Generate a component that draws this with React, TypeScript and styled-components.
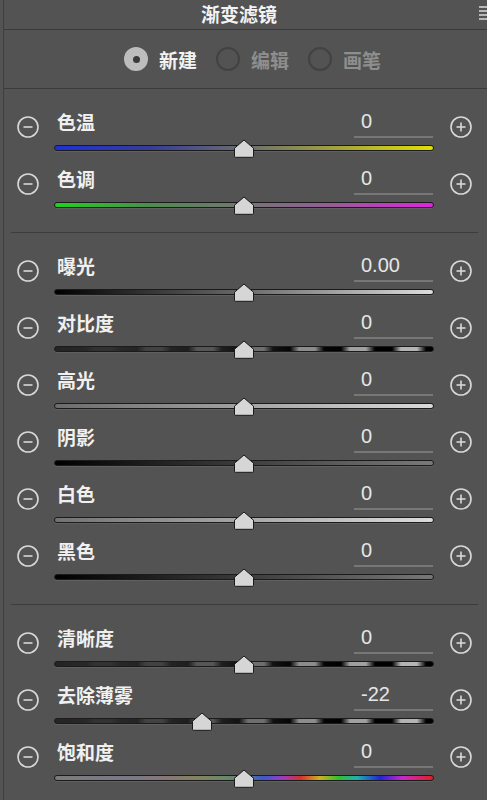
import React from 'react';
import styled, { createGlobalStyle } from 'styled-components';

const GlobalStyle = createGlobalStyle`
  html, body {
    margin: 0;
    padding: 0;
    background: #535353;
  }
  body {
    font-family: "Noto Sans CJK SC", "Noto Sans", sans-serif;
    -webkit-font-smoothing: antialiased;
  }
`;

const gray = (v: number) => `rgb(${v},${v},${v})`;

// the banded contrast / clarity / dehaze track
const bandTrack = () => {
  const light = [50, 66, 86, 110, 140, 160, 180];
  const dark = [40, 36, 30, 18, 5, 0, 0];
  const stops: string[] = [`${gray(36)} 0px`];
  light.forEach((l, k) => {
    const c = 48 + 51 * k;
    stops.push(`${gray(dark[k])} ${c - 17}px`);
    stops.push(`${gray(l)} ${c - 8}px`);
    stops.push(`${gray(l)} ${c + 8}px`);
    stops.push(`${gray(dark[k])} ${c + 17}px`);
  });
  stops.push(`${gray(0)} 100%`);
  return `linear-gradient(90deg, ${stops.join(', ')})`;
};

const tracks = {
  temp: 'linear-gradient(90deg, #1f30d8 0%, #363c98 25%, #6c6c72 50%, #a4a43c 75%, #e0e000 100%)',
  tint: 'linear-gradient(90deg, #1ed21e 0%, #4e8c4e 25%, #747474 50%, #9a5a9a 75%, #e222e2 100%)',
  exposure: 'linear-gradient(90deg, #000 0%, #6a6a6a 50%, #dcdcdc 100%)',
  band: bandTrack(),
  highlights: 'linear-gradient(90deg, #6c6c6c 0%, #dadada 100%)',
  shadows: 'linear-gradient(90deg, #000 0%, #7a7a7a 100%)',
  whites: 'linear-gradient(90deg, #727272 0%, #dcdcdc 100%)',
  blacks: 'linear-gradient(90deg, #000 0%, #777 100%)',
  saturation:
    'linear-gradient(90deg, #7c7c7c 0%, #7a7888 20%, #887676 30%, #84845e 38%, #6a886a 45%, #5e7e7e 50%, #3a5ad0 55%, #9a3ac8 60%, #d83030 65%, #d0b020 70%, #30c030 75%, #20b0b0 80%, #2424d8 86%, #c828c8 92%, #e02020 100%)',
};

type Slider = { label: string; value: string; pos: number; track: string };

const sections: Slider[][] = [
  [
    { label: '色温', value: '0', pos: 50, track: tracks.temp },
    { label: '色调', value: '0', pos: 50, track: tracks.tint },
  ],
  [
    { label: '曝光', value: '0.00', pos: 50, track: tracks.exposure },
    { label: '对比度', value: '0', pos: 50, track: tracks.band },
    { label: '高光', value: '0', pos: 50, track: tracks.highlights },
    { label: '阴影', value: '0', pos: 50, track: tracks.shadows },
    { label: '白色', value: '0', pos: 50, track: tracks.whites },
    { label: '黑色', value: '0', pos: 50, track: tracks.blacks },
  ],
  [
    { label: '清晰度', value: '0', pos: 50, track: tracks.band },
    { label: '去除薄雾', value: '-22', pos: 39, track: tracks.band },
    { label: '饱和度', value: '0', pos: 50, track: tracks.saturation },
  ],
];

const modes = ['新建', '编辑', '画笔'];

export default function App() {
  return (
    <>
      <GlobalStyle />
      <Panel>
        <Header>
          <Title>渐变滤镜</Title>
          <MenuIcon width="8" height="15" viewBox="0 0 8 15">
            {[1, 5, 9, 13].map((y) => (
              <rect key={y} x="0" y={y - 0.8} width="8" height="1.6" fill="#d2d2d2" />
            ))}
          </MenuIcon>
        </Header>
        <Modes>
          {modes.map((m, i) => (
            <Mode key={m} $active={i === 0}>
              <Radio $active={i === 0} />
              {m}
            </Mode>
          ))}
        </Modes>
        {sections.map((rows, si) => (
          <React.Fragment key={si}>
            {si > 0 && <Divider />}
            <Section>
              {rows.map((s) => (
                <Row key={s.label}>
                  <StepButton $offset={12.5}>
                    <StepIcon />
                  </StepButton>
                  <Control>
                    <TopLine>
                      <Label>{s.label}</Label>
                      <ValueField>{s.value}</ValueField>
                    </TopLine>
                    <Track $bg={s.track}>
                      <Thumb width="22" height="19" viewBox="0 0 22 19" style={{ left: `${s.pos}%` }}>
                        <path
                          d="M1.5 17.3 V9.2 L11 1 L20.5 9.2 V17.3 Q20.5 18.3 19.5 18.3 H2.5 Q1.5 18.3 1.5 17.3 Z"
                          fill="#d6d6d6"
                          stroke="#1a1a1a"
                          strokeWidth="1"
                        />
                      </Thumb>
                    </Track>
                  </Control>
                  <StepButton $offset={16}>
                    <StepIcon plus />
                  </StepButton>
                </Row>
              ))}
            </Section>
          </React.Fragment>
        ))}
      </Panel>
    </>
  );
}

const StepIcon = ({ plus }: { plus?: boolean }) => (
  <svg width="22" height="22" viewBox="0 0 22 22">
    <circle cx="11" cy="11" r="10" fill="none" stroke="#d8d8d8" strokeWidth="1.6" />
    <line x1="6.5" y1="11" x2="15.5" y2="11" stroke="#d8d8d8" strokeWidth="1.6" />
    {plus && <line x1="11" y1="6.5" x2="11" y2="15.5" stroke="#d8d8d8" strokeWidth="1.6" />}
  </svg>
);

const Panel = styled.div`
  margin-left: 3px;
  border-left: 1px solid #3f3f3f;
  height: 800px;
  overflow: hidden;
  background: #535353;
`;

const Header = styled.div`
  display: flex;
  height: 29px;
  border-bottom: 1px solid #3b3b3b;
`;

const Title = styled.div`
  flex: 1;
  text-align: center;
  padding-right: 5px;
  font-size: 19px;
  line-height: 27px;
  font-weight: 600;
  color: #f2f2f2;
`;

const MenuIcon = styled.svg`
  flex: none;
  margin-top: 6px;
`;

const Modes = styled.div`
  display: flex;
  align-items: center;
  gap: 19px;
  height: 58px;
  padding-left: 120px;
  border-bottom: 1px solid #3b3b3b;
`;

const Mode = styled.div<{ $active: boolean }>`
  display: flex;
  align-items: center;
  gap: 11px;
  font-size: 19px;
  font-weight: 600;
  color: ${(p) => (p.$active ? '#f2f2f2' : '#8e8e8e')};
`;

const Radio = styled.span<{ $active: boolean }>`
  width: 24px;
  height: 24px;
  box-sizing: border-box;
  border-radius: 50%;
  display: flex;
  align-items: center;
  justify-content: center;
  background: ${(p) => (p.$active ? '#bdbdbd' : 'transparent')};
  border: ${(p) => (p.$active ? 'none' : '2px solid #424242')};

  &::after {
    content: '';
    display: ${(p) => (p.$active ? 'block' : 'none')};
    width: 7px;
    height: 7px;
    border-radius: 50%;
    background: #3a3a3a;
  }
`;

const Section = styled.div`
  padding: 19px 0 10px;
`;

const Divider = styled.div`
  margin: 0 9px 0 7px;
  border-top: 1px solid #3c3c3c;
`;

const Row = styled.div`
  display: grid;
  grid-template-columns: 50px 380px 1fr;
  height: 57px;
`;

const StepButton = styled.button<{ $offset: number }>`
  justify-self: start;
  align-self: start;
  margin: 8px 0 0 ${(p) => p.$offset}px;
  padding: 0;
  border: none;
  background: none;
  width: 22px;
  height: 22px;
  display: block;

  svg {
    display: block;
  }
`;

const Control = styled.div`
  display: flex;
  flex-direction: column;
`;

const TopLine = styled.div`
  display: flex;
  justify-content: space-between;
  height: 30px;
`;

const Label = styled.span`
  padding-left: 3px;
  font-size: 19px;
  line-height: 28px;
  font-weight: 600;
  color: #f0f0f0;
`;

const ValueField = styled.div`
  width: 72px;
  height: 28px;
  margin-right: 1px;
  padding-left: 7px;
  border-bottom: 2px solid #777;
  font-family: "Liberation Sans", Arial, sans-serif;
  font-size: 20px;
  line-height: 27px;
  color: #e6e6e6;
`;

const Track = styled.div<{ $bg: string }>`
  position: relative;
  height: 6px;
  margin-top: 7px;
  box-sizing: border-box;
  border: 1px solid #1b1b1b;
  border-radius: 3px;
  background: ${(p) => p.$bg};
  box-shadow: 0 1px 0 rgba(255, 255, 255, 0.08);
`;

const Thumb = styled.svg`
  position: absolute;
  top: -7px;
  margin-left: -11px;
`;
